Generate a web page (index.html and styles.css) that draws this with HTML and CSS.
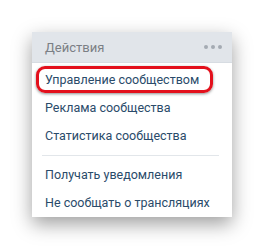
FILE: index.html
```html
<!DOCTYPE html>
<html lang="ru">
<head>
    <meta charset="UTF-8">
    <title>Действия</title>
    <link rel="stylesheet" href="styles.css">
</head>
<body>
    <div class="menu">
        <div class="menu-head">
            <span class="menu-title">Действия</span>
            <span class="dots"><i></i><i></i><i></i></span>
        </div>
        <div class="menu-list">
            <a class="item marked">Управление сообществом</a>
            <a class="item">Реклама сообщества</a>
            <a class="item">Статистика сообщества</a>
            <div class="sep"></div>
            <a class="item">Получать уведомления</a>
            <a class="item">Не сообщать о трансляциях</a>
        </div>
    </div>
</body>
</html>
```

FILE: styles.css
```css
body {
    margin: 0;
    padding: 32px;
    background: #fff;
    font-family: Roboto, "Open Sans", Arial, sans-serif;
}
.menu {
    width: 200px;
    background: #fff;
    box-shadow: 0 7px 18px rgba(0, 0, 0, 0.38);
}
.menu-head {
    height: 30px;
    display: flex;
    align-items: center;
    justify-content: space-between;
    padding: 0 10px 0 13px;
    background: #e1e5ea;
    border-bottom: 1px solid #d7dce2;
}
.menu-title {
    font-size: 13px;
    color: #7b7f85;
}
.dots {
    display: flex;
    gap: 3px;
}
.dots i {
    width: 4px;
    height: 4px;
    border-radius: 50%;
    background: #a4abb3;
}
.menu-list {
    padding: 3px 0 0;
}
.item {
    display: block;
    height: 28px;
    line-height: 28px;
    padding: 0 13px;
    font-size: 12.5px;
    color: #2a4b6a;
}
.item.marked {
    position: relative;
}
.item.marked::after {
    content: "";
    position: absolute;
    left: 4px;
    top: 0;
    width: 171px;
    height: 21px;
    border: 3px solid #e3101c;
    border-radius: 9px;
    box-shadow: 0 1px 3px rgba(0, 0, 0, 0.45);
}
.sep {
    height: 1px;
    margin: 5px 13px 5px 10px;
    background: #e2e6ea;
}
```
